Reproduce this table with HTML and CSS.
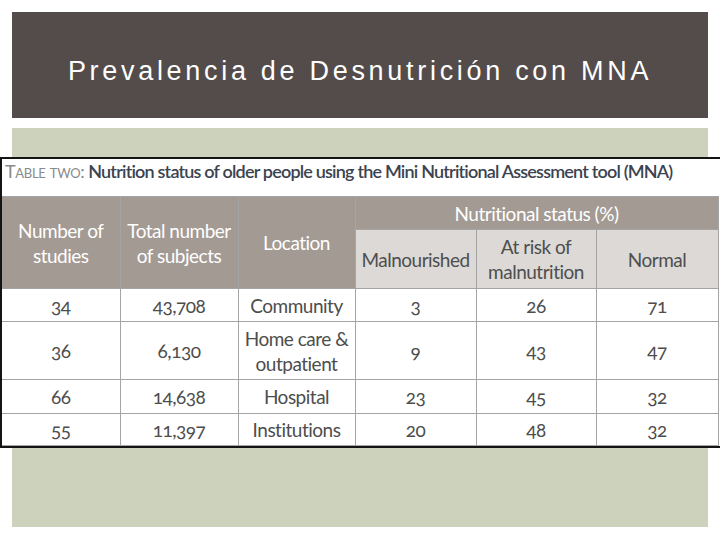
FILE: index.html
```html
<!DOCTYPE html>
<html lang="es">
<head>
<meta charset="utf-8">
<title>Prevalencia de Desnutrición con MNA</title>
<link rel="stylesheet" href="styles.css">
</head>
<body>
<div class="slide">
  <header class="title-bar">
    <h1 class="title">Prevalencia de Desnutrición con MNA</h1>
  </header>
  <main class="panel"></main>
  <figure class="figure">
    <figcaption class="caption"><span class="cap-label">Table two:</span> Nutrition status of older people using the Mini Nutritional Assessment tool (MNA)</figcaption>
    <table class="data">
      <colgroup>
        <col class="c1"><col class="c2"><col class="c3"><col class="c4"><col class="c5"><col class="c6">
      </colgroup>
      <thead>
        <tr class="h-top">
          <th rowspan="2" class="dark">Number of<br>studies</th>
          <th rowspan="2" class="dark">Total number<br>of subjects</th>
          <th rowspan="2" class="dark">Location</th>
          <th colspan="3" class="dark group">Nutritional status (%)</th>
        </tr>
        <tr class="h-sub">
          <th class="light">Malnourished</th>
          <th class="light">At risk of<br>malnutrition</th>
          <th class="light">Normal</th>
        </tr>
      </thead>
      <tbody>
        <tr class="r1"><td>34</td><td>43,708</td><td>Community</td><td>3</td><td>26</td><td>71</td></tr>
        <tr class="r2"><td>36</td><td>6,130</td><td>Home care &amp;<br>outpatient</td><td>9</td><td>43</td><td>47</td></tr>
        <tr class="r3"><td>66</td><td>14,638</td><td>Hospital</td><td>23</td><td>45</td><td>32</td></tr>
        <tr class="r4"><td>55</td><td>11,397</td><td>Institutions</td><td>20</td><td>48</td><td>32</td></tr>
      </tbody>
    </table>
  </figure>
</div>
</body>
</html>
```

FILE: styles.css
```css
html, body {
  margin: 0;
  padding: 0;
  background: #ffffff;
  overflow: hidden;
}

.slide {
  position: relative;
  width: 720px;
  height: 540px;
  padding: 12px 12px 0 12px;
  box-sizing: border-box;
  display: flex;
  flex-direction: column;
  gap: 10px;
  overflow: hidden;
}

.title-bar {
  height: 106px;
  background: #534c4a;
  display: flex;
  align-items: center;
  justify-content: center;
}

.title {
  margin: 0;
  padding-top: 12px;
  color: #ffffff;
  font-family: "Liberation Sans", Arial, sans-serif;
  font-weight: normal;
  font-size: 27px;
  letter-spacing: 3.7px;
}

.panel {
  height: 399px;
  background: #cdd2bc;
}

.figure {
  position: absolute;
  left: 0;
  top: 157px;
  width: 726px;
  margin: 0;
  background: #ffffff;
  border: 2px solid #141414;
  box-sizing: border-box;
  font-family: Lato, "Open Sans", sans-serif;
}

.caption {
  height: 37px;
  padding-left: 3px;
  font-size: 18px;
  letter-spacing: -0.8px;
  line-height: 25px;
  color: #3b4350;
  font-weight: 600;
  white-space: nowrap;
}

.cap-label {
  font-variant: small-caps;
  font-weight: normal;
  color: #8a8a8a;
  letter-spacing: -0.3px;
}

.data {
  border-collapse: collapse;
  table-layout: fixed;
  width: 716px;
  font-size: 19px;
  letter-spacing: -0.5px;
  color: #4d4d4d;
}

.c1 { width: 118px; }
.c2 { width: 118px; }
.c3 { width: 117px; }
.c4 { width: 121px; }
.c5 { width: 120px; }
.c6 { width: 122px; }

.data th, .data td {
  border: 1px solid #a4a4a4;
  padding: 0;
  text-align: center;
  line-height: 25px;
  font-weight: normal;
  font-variant-numeric: oldstyle-nums;
}

.data tr > :first-child { border-left: none; }

.dark {
  background: #a39a93;
  color: #ffffff;
  border-color: #f2f0ee;
}

.light {
  background: #dcd9d6;
  color: #4e4e4e;
}

.h-top { height: 33px; }
.h-sub { height: 59px; }
.r1 { height: 33px; }
.r2 { height: 58px; }
.r3 { height: 34px; }
.r4 { height: 32px; }
```
